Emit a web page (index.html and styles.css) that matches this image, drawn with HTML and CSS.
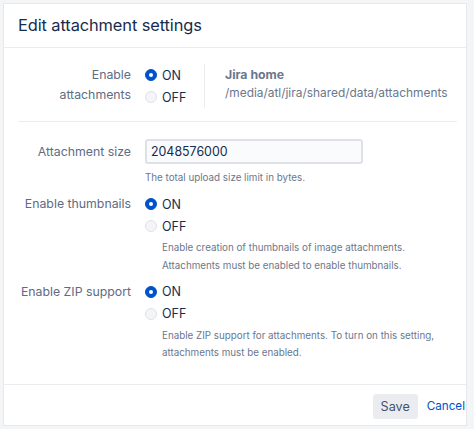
FILE: index.html
```html
<!DOCTYPE html>
<html>
<head>
<meta charset="utf-8">
<title>Edit attachment settings</title>
<link rel="stylesheet" href="styles.css">
</head>
<body>
<div class="dialog">
  <header class="dialog-header">
    <h2 class="dialog-title">Edit attachment settings</h2>
  </header>
  <div class="dialog-body">
    <section class="section section-top">
      <div class="field">
        <div class="label label-two">Enable<br>attachments</div>
        <div class="control control-split">
          <div class="radios radios-narrow">
            <label class="radio"><span class="dot dot-on"></span>ON</label>
            <label class="radio"><span class="dot"></span>OFF</label>
          </div>
          <div class="home">
            <div class="home-title">Jira home</div>
            <div class="home-path">/media/atl/jira/shared/data/attachments</div>
          </div>
        </div>
      </div>
    </section>
    <hr class="divider">
    <section class="section section-main">
      <div class="field field-gap">
        <div class="label label-input">Attachment size</div>
        <div class="control">
          <div class="text-input">2048576000</div>
          <div class="desc desc-input">The total upload size limit in bytes.</div>
        </div>
      </div>
      <div class="field field-gap">
        <div class="label">Enable thumbnails</div>
        <div class="control">
          <div class="radios">
            <label class="radio"><span class="dot dot-on"></span>ON</label>
            <label class="radio"><span class="dot"></span>OFF</label>
          </div>
          <div class="desc desc-radio">Enable creation of thumbnails of image attachments.<br>Attachments must be enabled to enable thumbnails.</div>
        </div>
      </div>
      <div class="field">
        <div class="label">Enable ZIP support</div>
        <div class="control">
          <div class="radios">
            <label class="radio"><span class="dot dot-on"></span>ON</label>
            <label class="radio"><span class="dot"></span>OFF</label>
          </div>
          <div class="desc desc-radio">Enable ZIP support for attachments. To turn on this setting,<br>attachments must be enabled.</div>
        </div>
      </div>
    </section>
  </div>
  <footer class="dialog-footer">
    <button class="btn btn-save">Save</button>
    <button class="btn btn-cancel">Cancel</button>
  </footer>
</div>
</body>
</html>
```
FILE: styles.css
```css
* { box-sizing: border-box; }
html, body { margin: 0; padding: 0; }
body {
  background: #f4f5f7;
  padding: 3px 0 3px 3px;
  font-family: "Inter", "Liberation Sans", Arial, sans-serif;
  color: #172b4d;
}
.dialog {
  width: 464px;
  background: #fff;
  border: 1px solid #e6e8ec;
}
.dialog-header {
  height: 44px;
  border-bottom: 1px solid #ebecf0;
  padding-left: 14px;
}
.dialog-title {
  margin: 0;
  font-size: 16.4px;
  font-weight: 400;
  line-height: 43px;
  color: #172b4d;
  letter-spacing: -0.1px;
}
.section-top { padding: 16px 0 13px; }
.section-main { padding: 17px 0 22px; }
.divider {
  border: 0;
  border-top: 1px solid #ebecf0;
  margin: 0 9px 0 14px;
  height: 0;
}
.field {
  display: grid;
  grid-template-columns: 127px 1fr;
  column-gap: 14px;
}
.field-gap { margin-bottom: 6.5px; }
.label {
  text-align: right;
  font-size: 12.3px;
  line-height: 22px;
  color: #5e6c84;
}
.label-two { line-height: 20px; padding-top: 1px; }
.label-input { line-height: 25px; }
.control { display: flex; flex-direction: column; align-items: flex-start; }
.control-split { flex-direction: row; align-items: stretch; }
.radios { display: flex; flex-direction: column; }
.radios-narrow { width: 59px; }
.radio {
  display: flex;
  align-items: center;
  height: 22px;
  font-size: 12.5px;
  color: #172b4d;
}
.dot {
  width: 12px;
  height: 12px;
  border-radius: 50%;
  background: #f4f5f7;
  border: 1px solid #dfe1e6;
  margin-right: 5px;
  flex: none;
  display: flex;
  align-items: center;
  justify-content: center;
}
.dot-on {
  background: #0052cc;
  border-color: #0052cc;
}
.dot-on::after {
  content: "";
  width: 4px;
  height: 4px;
  border-radius: 50%;
  background: #fff;
}
.home {
  border-left: 1px solid #ebecf0;
  padding: 2px 0 0 20px;
  font-size: 11.9px;
  line-height: 18px;
  color: #6b778c;
}
.home-title { font-weight: 700; font-size: 12.3px; color: #6b778c; }
.text-input {
  width: 218px;
  height: 25px;
  background: #fafbfc;
  border: 2px solid #dfe1e6;
  border-radius: 3px;
  padding-left: 4px;
  font-size: 12.4px;
  line-height: 21px;
  color: #172b4d;
}
.desc {
  font-size: 9.8px;
  line-height: 17.5px;
  color: #6b778c;
}
.desc-input { margin-top: 5px; }
.desc-radio { margin-top: 2px; padding-left: 17px; }
.dialog-footer {
  border-top: 1px solid #ebecf0;
  height: 41px;
  padding-top: 9px;
  display: flex;
  justify-content: flex-end;
  align-items: flex-start;
}
.btn {
  font-family: inherit;
  font-size: 12.6px;
  height: 25px;
  border: 0;
  border-radius: 3px;
  cursor: pointer;
}
.btn-save {
  background: #ebecf0;
  color: #42526e;
  width: 45px;
  padding: 0;
}
.btn-cancel {
  background: transparent;
  color: #0052cc;
  font-size: 11.7px;
  padding: 0 1px 0 9px;
}
```
